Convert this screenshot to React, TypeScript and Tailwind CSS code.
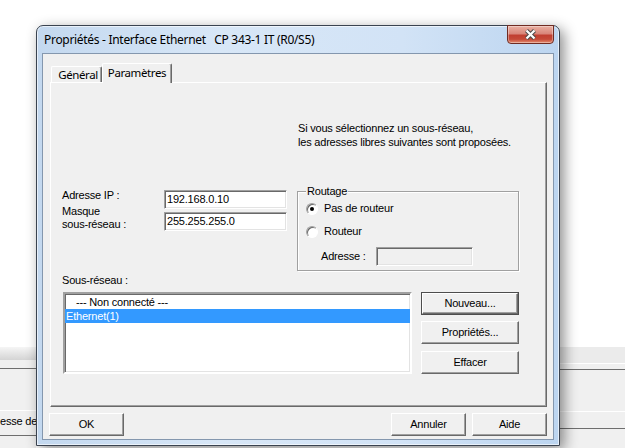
import type { ReactNode } from "react";

const ui = "font-['Liberation_Sans',Arial,sans-serif] text-[11px] tracking-[-0.2px] text-black";
const seg = "font-['Noto_Sans','Open_Sans',sans-serif] text-black";

const Btn = ({
  children,
  className = "",
  isDefault = false,
}: {
  children: ReactNode;
  className?: string;
  isDefault?: boolean;
}) => {
  if (isDefault) {
    return (
      <div className={`border border-[#4d4d4d] ${className}`}>
        <div className="flex h-full w-full items-center justify-center border border-t-white border-l-white border-r-[#696969] border-b-[#696969] bg-[#f0f0f0] shadow-[inset_-1px_-1px_0_#a0a0a0] leading-[13px]">
          {children}
        </div>
      </div>
    );
  }
  return (
    <div
      className={`flex items-center justify-center border border-t-white border-l-white border-r-[#696969] border-b-[#696969] bg-[#f0f0f0] shadow-[inset_-1px_-1px_0_#a0a0a0] leading-[13px] ${className}`}
    >
      {children}
    </div>
  );
};

const Edit = ({
  value,
  className = "",
  disabled = false,
}: {
  value?: string;
  className?: string;
  disabled?: boolean;
}) => (
  <div
    className={`flex items-center border border-t-[#a0a0a0] border-l-[#a0a0a0] border-r-white border-b-white pl-[2px] leading-[13px] shadow-[inset_1px_1px_0_#696969,inset_-1px_-1px_0_#e3e3e3] ${
      disabled ? "bg-[#f0f0f0]" : "bg-white"
    } ${className}`}
  >
    {value}
  </div>
);

const Radio = ({ checked = false }: { checked?: boolean }) => (
  <div className="flex h-[12px] w-[12px] shrink-0 items-center justify-center rounded-full border border-t-[#a0a0a0] border-l-[#a0a0a0] border-r-white border-b-white bg-white shadow-[inset_1px_1px_0_#696969]">
    {checked && <div className="h-[4px] w-[4px] rounded-full bg-black" />}
  </div>
);

export default function App() {
  return (
    <div className="relative h-[448px] w-[625px] overflow-hidden bg-white">
      {/* fenêtre en arrière-plan */}
      <div className="flex h-full pt-[347px]">
        <div className="flex w-[36px] flex-col bg-[#f0f0f0]">
          <div className="h-[13px] bg-[linear-gradient(180deg,#f5f5f5,#d4d4d4)]" />
          <div className="h-[8px]" />
          <div className="h-px bg-[#6e6e6e]" />
          <div className="h-[41px]" />
          <div className="h-px bg-white" />
          <div className={`${ui} h-[24px] whitespace-nowrap pt-[4px] leading-[13px]`}>esse de</div>
          <div className="h-px bg-[#6e6e6e]" />
        </div>
        <div className="flex-1" />
        <div className="flex w-[65px] flex-col bg-[#f0f0f0]">
          <div className="h-[16px] bg-[#ebebeb]" />
          <div className="h-px bg-white" />
          <div className="h-[5px]" />
          <div className="h-px bg-[#6e6e6e]" />
          <div className="h-[41px]" />
          <div className="h-px bg-white" />
          <div className="h-[16px]" />
          <div className="h-px bg-[#6e6e6e]" />
        </div>
      </div>

      {/* boîte de dialogue */}
      <div className="absolute left-[36px] top-[25px] flex h-[421px] w-[524px] flex-col rounded-t-[7px] border border-[#3a4350] bg-[linear-gradient(90deg,#c3d8ef,#d8e7f7_35%,#d2e3f6_70%,#bcd5f0)] shadow-[inset_0_0_0_1px_rgba(255,255,255,0.6),4px_4px_14px_rgba(0,0,0,0.45)]">
        <div className="flex h-[27px] shrink-0 items-start justify-between">
          <span className={`${seg} whitespace-pre pl-[7px] pt-[6px] text-[12px] leading-[16px] tracking-[-0.3px]`}>
            Propriétés - Interface Ethernet   CP 343-1 IT (R0/S5)
          </span>
          <div className="mr-[5px] -mt-px flex h-[19px] w-[47px] items-center justify-center rounded-b-[4px] border border-[#6f2b22] bg-[linear-gradient(180deg,#eab0a2_0%,#d9867a_45%,#c13f31_55%,#c54a38_78%,#e58d70_100%)] shadow-[inset_0_0_0_1px_rgba(255,255,255,0.35)]">
            <svg width="13" height="11" viewBox="0 0 13 11">
              <path d="M2.5 1.5 L10.5 9.5 M10.5 1.5 L2.5 9.5" stroke="#4a4a4a" strokeWidth="4.2" />
              <path d="M2.5 1.5 L10.5 9.5 M10.5 1.5 L2.5 9.5" stroke="#ffffff" strokeWidth="2.2" />
            </svg>
          </div>
        </div>

        <div className={`${ui} mx-[5px] mb-[5px] flex flex-1 flex-col border border-[#8497ae] bg-[#f0f0f0]`}>
          {/* onglets */}
          <div className="relative z-10 -mb-px flex items-end pl-[8px] pt-[9px]">
            <div className={`${seg} mb-px flex h-[16px] w-[51px] items-center justify-center rounded-t-[2px] border border-b-0 border-t-white border-l-white border-r-[#696969] pl-[3px] text-[11.5px] leading-[14px] tracking-[-0.4px] shadow-[inset_-1px_0_0_#a0a0a0]`}>
              Général
            </div>
            <div className={`${seg} flex h-[20px] w-[70px] items-center justify-center rounded-t-[2px] border border-b-0 border-t-white border-l-white border-r-[#696969] bg-[#f0f0f0] pb-px text-[11.5px] leading-[14px] tracking-[-0.4px] shadow-[inset_-1px_0_0_#a0a0a0]`}>
              Paramètres
            </div>
          </div>

          {/* panneau */}
          <div className="ml-[7px] mr-[6px] flex h-[325px] flex-col border border-t-white border-l-white border-r-[#696969] border-b-[#696969] shadow-[inset_-1px_-1px_0_#a0a0a0]">
            <div className="pl-[247px] pt-[38px] leading-[14px]">
              <div>Si vous sélectionnez un sous-réseau,</div>
              <div>les adresses libres suivantes sont proposées.</div>
            </div>

            <div className="mt-[37px] flex items-start pl-[11px]">
              <div className="flex w-[102px] flex-col leading-[13px]">
                <div className="mt-[3px]">Adresse IP :</div>
                <div className="mt-[3px]">Masque</div>
                <div>sous-réseau :</div>
              </div>
              <div className="flex w-[123px] flex-col">
                <Edit value="192.168.0.10" className="mt-[4px] h-[19px]" />
                <Edit value="255.255.255.0" className="mt-[3px] h-[19px]" />
              </div>
              <div className="ml-[10px] mt-[5px] flex h-[80px] w-[222px] flex-col border border-[#a0a0a0] shadow-[inset_1px_1px_0_#ffffff,1px_1px_0_#ffffff]">
                <div className="ml-[8px] -mt-[7px] w-fit bg-[#f0f0f0] px-px leading-[13px]">Routage</div>
                <div className="ml-[8px] mt-[4px] flex items-center gap-[6px] leading-[13px]">
                  <Radio checked />
                  <span>Pas de routeur</span>
                </div>
                <div className="ml-[8px] mt-[10px] flex items-center gap-[6px] leading-[13px]">
                  <Radio />
                  <span>Routeur</span>
                </div>
                <div className="ml-[23px] mt-[9px] flex items-center leading-[13px]">
                  <span className="w-[55px]">Adresse :</span>
                  <Edit disabled className="h-[19px] w-[97px]" />
                </div>
              </div>
            </div>

            <div className="mt-[3px] pl-[11px] leading-[13px]">Sous-réseau :</div>
            <div className="mt-[5px] flex items-start pl-[12px]">
              <div className="flex h-[82px] w-[349px] flex-col border-2 border-t-[#a0a0a0] border-l-[#a0a0a0] border-r-white border-b-white bg-white pt-px leading-[14px] shadow-[inset_1px_1px_0_#696969,inset_-1px_-1px_0_#e3e3e3]">
                <div className="h-[14px] pl-[11px]">--- Non connecté ---</div>
                <div className="h-[14px] bg-[#3399ff] pl-px text-white">Ethernet(1)</div>
              </div>
              <div className="ml-[9px] flex flex-col">
                <Btn isDefault className="h-[23px] w-[98px]">
                  Nouveau...
                </Btn>
                <Btn className="mt-[6px] h-[23px] w-[98px]">Propriétés...</Btn>
                <Btn className="mt-[7px] h-[23px] w-[98px]">Effacer</Btn>
              </div>
            </div>
          </div>

          {/* boutons du bas */}
          <div className="mt-[6px] flex items-center px-[6px]">
            <Btn className="h-[23px] w-[75px]">OK</Btn>
            <div className="flex-1" />
            <Btn className="h-[23px] w-[75px]">Annuler</Btn>
            <Btn className="ml-[6px] h-[23px] w-[75px]">Aide</Btn>
          </div>
        </div>
      </div>
    </div>
  );
}
